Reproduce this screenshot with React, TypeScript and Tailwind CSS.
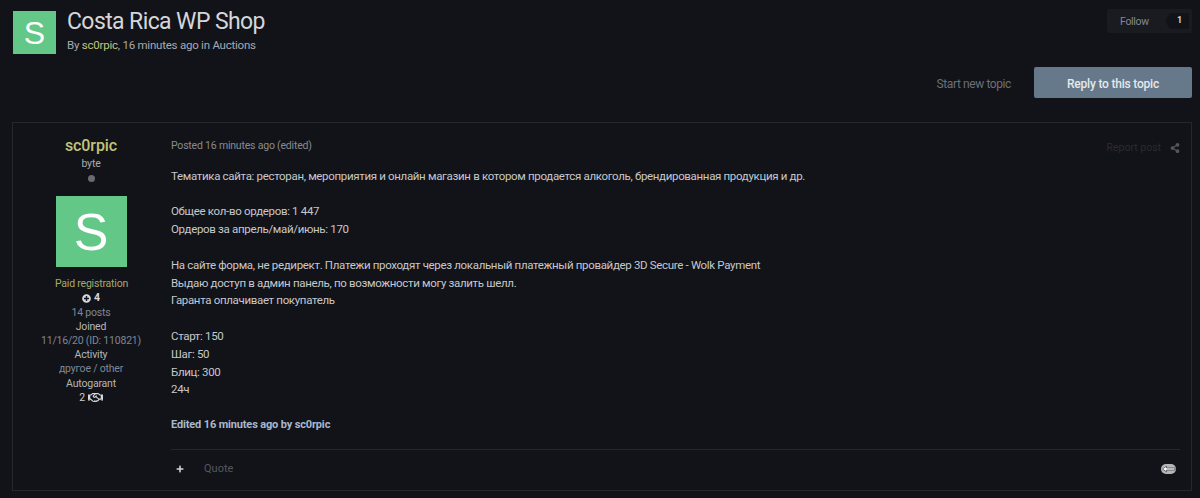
import { FaPlus, FaPlusCircle, FaRegHandshake, FaShareAlt } from 'react-icons/fa';

function Avatar({ className }: { className: string }) {
  return (
    <div className={`flex shrink-0 items-center justify-center bg-[#62c787] text-white ${className}`} style={{ fontFamily: '"Liberation Sans", sans-serif' }}>
      S
    </div>
  );
}

const lines = [
  'Тематика сайта: ресторан, мероприятия и онлайн магазин в котором продается алкоголь, брендированная продукция и др.',
  '',
  'Общее кол-во ордеров: 1 447',
  'Ордеров за апрель/май/июнь: 170',
  '',
  'На сайте форма, не редирект. Платежи проходят через локальный платежный провайдер 3D Secure - Wolk Payment',
  'Выдаю доступ в админ панель, по возможности могу залить шелл.',
  'Гаранта оплачивает покупатель',
  '',
  'Старт: 150',
  'Шаг: 50',
  'Блиц: 300',
  '24ч',
];

export default function App() {
  return (
    <div className="h-[498px] w-[1200px] overflow-hidden bg-[#121318] text-[12px] text-[#c9cbd0]" style={{ fontFamily: 'Roboto, "Noto Sans", sans-serif' }}>
      <header className="flex items-start justify-between pl-[13px] pr-[8px] pt-[9px]">
        <div className="flex gap-[11px] pt-[2px]">
          <Avatar className="h-[43px] w-[43px] text-[32px]" />
          <div className="-mt-[4px]">
            <h1 className="text-[23px] leading-[29px] tracking-[-0.6px] text-[#d4d6da]">Costa Rica WP Shop</h1>
            <p className="mt-[1px] text-[11.5px] leading-[16px] tracking-[-0.23px] text-[#a6a9b2]">
              By <span className="text-[#c3c47c]">sc0rpic</span>, 16 minutes ago in Auctions
            </p>
          </div>
        </div>
        <div className="flex h-[24px] w-[85px] items-center justify-between rounded-[2px] bg-[#1a1b20] pl-[13px] pr-[3px]">
          <span className="pt-[1px] text-[10.5px] tracking-[-0.3px] text-[#85878e]">Follow</span>
          <span className="relative flex h-[16px] w-[19px] items-center justify-center bg-[#121318] text-[9px] font-bold text-[#d0d2d6]">
            <span className="absolute -left-[5px] top-0 h-0 w-0 border-y-[8px] border-r-[5px] border-y-transparent border-r-[#121318]" />
            1
          </span>
        </div>
      </header>

      <div className="mt-[13px] flex items-center justify-end pr-[8px]">
        <span className="mr-[23px] pt-[2px] text-[12px] tracking-[-0.4px] text-[#6d6f76]">Start new topic</span>
        <span className="flex h-[31px] w-[158px] items-center justify-center rounded-[2px] bg-[#65798a] pt-[2px] text-[12px] font-medium tracking-[-0.2px] text-[#e6e9ec]">
          Reply to this topic
        </span>
      </div>

      <article className="ml-[12px] mt-[24px] flex h-[369px] w-[1180px] border border-[#26272c]">
        <aside className="flex w-[157px] shrink-0 flex-col items-center pr-[1px] pt-[13px] text-center text-[10.5px] leading-[14.2px] tracking-[-0.2px]">
          <div className="text-[16px] font-medium leading-[20px] tracking-[-0.1px] text-[#c3c47c]">sc0rpic</div>
          <div className="mt-[1px] text-[#a9abb2]">byte</div>
          <div className="mt-[4px] h-[7px] w-[7px] rounded-full bg-[#6a6b70]" />
          <Avatar className="mt-[14px] h-[71px] w-[71px] text-[52px]" />
          <div className="mt-[10px] pl-[1px] text-[#a7a86e]">Paid registration</div>
          <div className="flex items-center gap-[3px] font-bold text-[#d5d7dc]">
            <FaPlusCircle className="h-[9px] w-[9px]" />
            4
          </div>
          <div className="text-[#7d8797]">14 posts</div>
          <div className="text-[#b4b6bb]">Joined</div>
          <div className="text-[#7d8797]">11/16/20 (ID: 110821)</div>
          <div className="text-[#b4b6bb]">Activity</div>
          <div className="text-[#7d8797]">другое / other</div>
          <div className="text-[#b4b6bb]">Autogarant</div>
          <div className="flex items-center gap-[3px] text-[#c9cbd0]">
            2 <FaRegHandshake className="h-[13px] w-[15px] text-[#d5d7dc]" />
          </div>
        </aside>

        <div className="ml-[1px] flex min-w-0 flex-1 flex-col pr-[11px] pt-[14px]">
          <div className="flex items-center justify-between">
            <span className="text-[10.5px] leading-[16px] tracking-[-0.2px] text-[#888a91]">Posted 16 minutes ago (edited)</span>
            <span className="flex items-center gap-[9px] pt-[3px] text-[10.5px] text-[#2a2b30]">
              Report post <FaShareAlt className="h-[10px] w-[10px] text-[#55565b]" />
            </span>
          </div>
          <div className="mt-[12px] text-[11.5px] leading-[17.8px] tracking-[-0.33px] text-[#c6c8cc]">
            {lines.map((line, i) => (
              <div key={i} className="h-[17.8px] whitespace-nowrap">{line}</div>
            ))}
          </div>
          <div className="mt-[18px] text-[11px] font-bold leading-[16px] tracking-[-0.15px] text-[#a9b8cd]">Edited 16 minutes ago by sc0rpic</div>
          <div className="mt-[16px] flex h-[38px] items-center justify-between border-t border-[#26272c]">
            <div className="flex items-center">
              <FaPlus className="ml-[5px] h-[8px] w-[8px] text-[#d5d7dc]" />
              <span className="ml-[20px] pt-[2px] text-[11px] text-[#55575d]">Quote</span>
            </div>
            <span className="mr-[4px] flex h-[10px] w-[15px] items-center justify-center rounded-full bg-[#b5b6b8]">
              <svg viewBox="0 0 15 10" className="h-[10px] w-[15px]" aria-hidden="true">
                <path d="M1.5 5L5.5 2.2V4H14v2H5.5v1.8z" fill="#ffffff" stroke="#3a3b40" strokeWidth="0.7" />
              </svg>
            </span>
          </div>
        </div>
      </article>
    </div>
  );
}
